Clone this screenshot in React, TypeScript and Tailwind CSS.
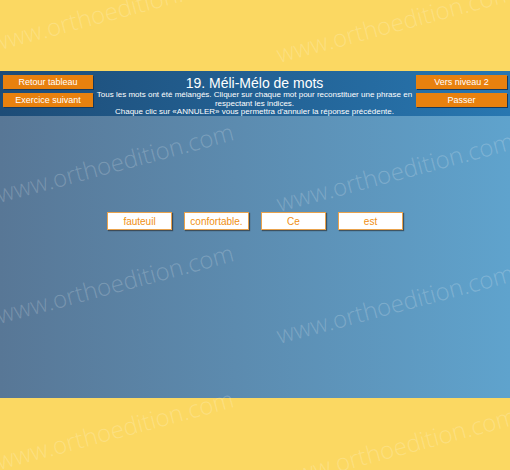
import React from 'react';

const marks = [
  'left-[-6px] top-[31px]',
  'left-[280px] top-[42px]',
  'left-[0px] top-[182px]',
  'left-[280px] top-[191px]',
  'left-[0px] top-[303px]',
  'left-[280px] top-[323px]',
  'left-[0px] top-[449px]',
  'left-[283px] top-[466px]',
];

const words = ['fauteuil', 'confortable.', 'Ce', 'est'];

function OrangeButton({ label }: { label: string }) {
  return (
    <button className="h-[14px] w-full bg-[#e8810e] text-[9px] leading-none text-white shadow-[1px_1px_0_#173a5c]">
      {label}
    </button>
  );
}

export default function App() {
  return (
    <div className="relative flex h-[470px] w-[510px] flex-col overflow-hidden bg-[#fbd862] font-['Liberation_Sans',Arial,sans-serif]">
      <div className="h-[71px]" />

      {/* header */}
      <div className="flex h-[45px] items-start bg-gradient-to-r from-[#1d4c77] to-[#2877b1] px-[3px] pt-[4px]">
        <div className="flex w-[90px] flex-col gap-[4px]">
          <OrangeButton label="Retour tableau" />
          <OrangeButton label="Exercice suivant" />
        </div>
        <div className="mt-[1px] flex flex-1 flex-col items-center text-center text-white">
          <h1 className="text-[14px] leading-[14px]">19. Méli-Mélo de mots</h1>
          <p className="mt-[1px] text-[8px] leading-[8.5px]">
            Tous les mots ont été mélangés. Cliquer sur chaque mot pour reconstituer une phrase en
            <br />
            respectant les indices.
            <br />
            Chaque clic sur «ANNULER» vous permettra d'annuler la réponse précédente.
          </p>
        </div>
        <div className="flex w-[91px] flex-col gap-[4px]">
          <OrangeButton label="Vers niveau 2" />
          <OrangeButton label="Passer" />
        </div>
      </div>

      {/* plateau */}
      <div className="flex h-[282px] justify-center gap-[12px] bg-gradient-to-r from-[#587796] to-[#5fa3cd] pt-[96px]">
        {words.map((w) => (
          <div
            key={w}
            className="relative z-10 flex h-[18px] w-[65px] items-center justify-center border border-[#e9a24c] bg-white text-[10px] text-[#ef8f14] shadow-[1px_1px_1px_rgba(40,40,40,0.6)]"
          >
            {w}
          </div>
        ))}
      </div>

      <div className="flex-1" />

      {marks.map((pos, i) => (
        <span
          key={i}
          className={`pointer-events-none absolute ${pos} origin-bottom-left -rotate-[15deg] whitespace-nowrap font-['Open_Sans',sans-serif] text-[24px] font-light leading-[24px] text-white/20`}
        >
          www.orthoedition.com
        </span>
      ))}
    </div>
  );
}
